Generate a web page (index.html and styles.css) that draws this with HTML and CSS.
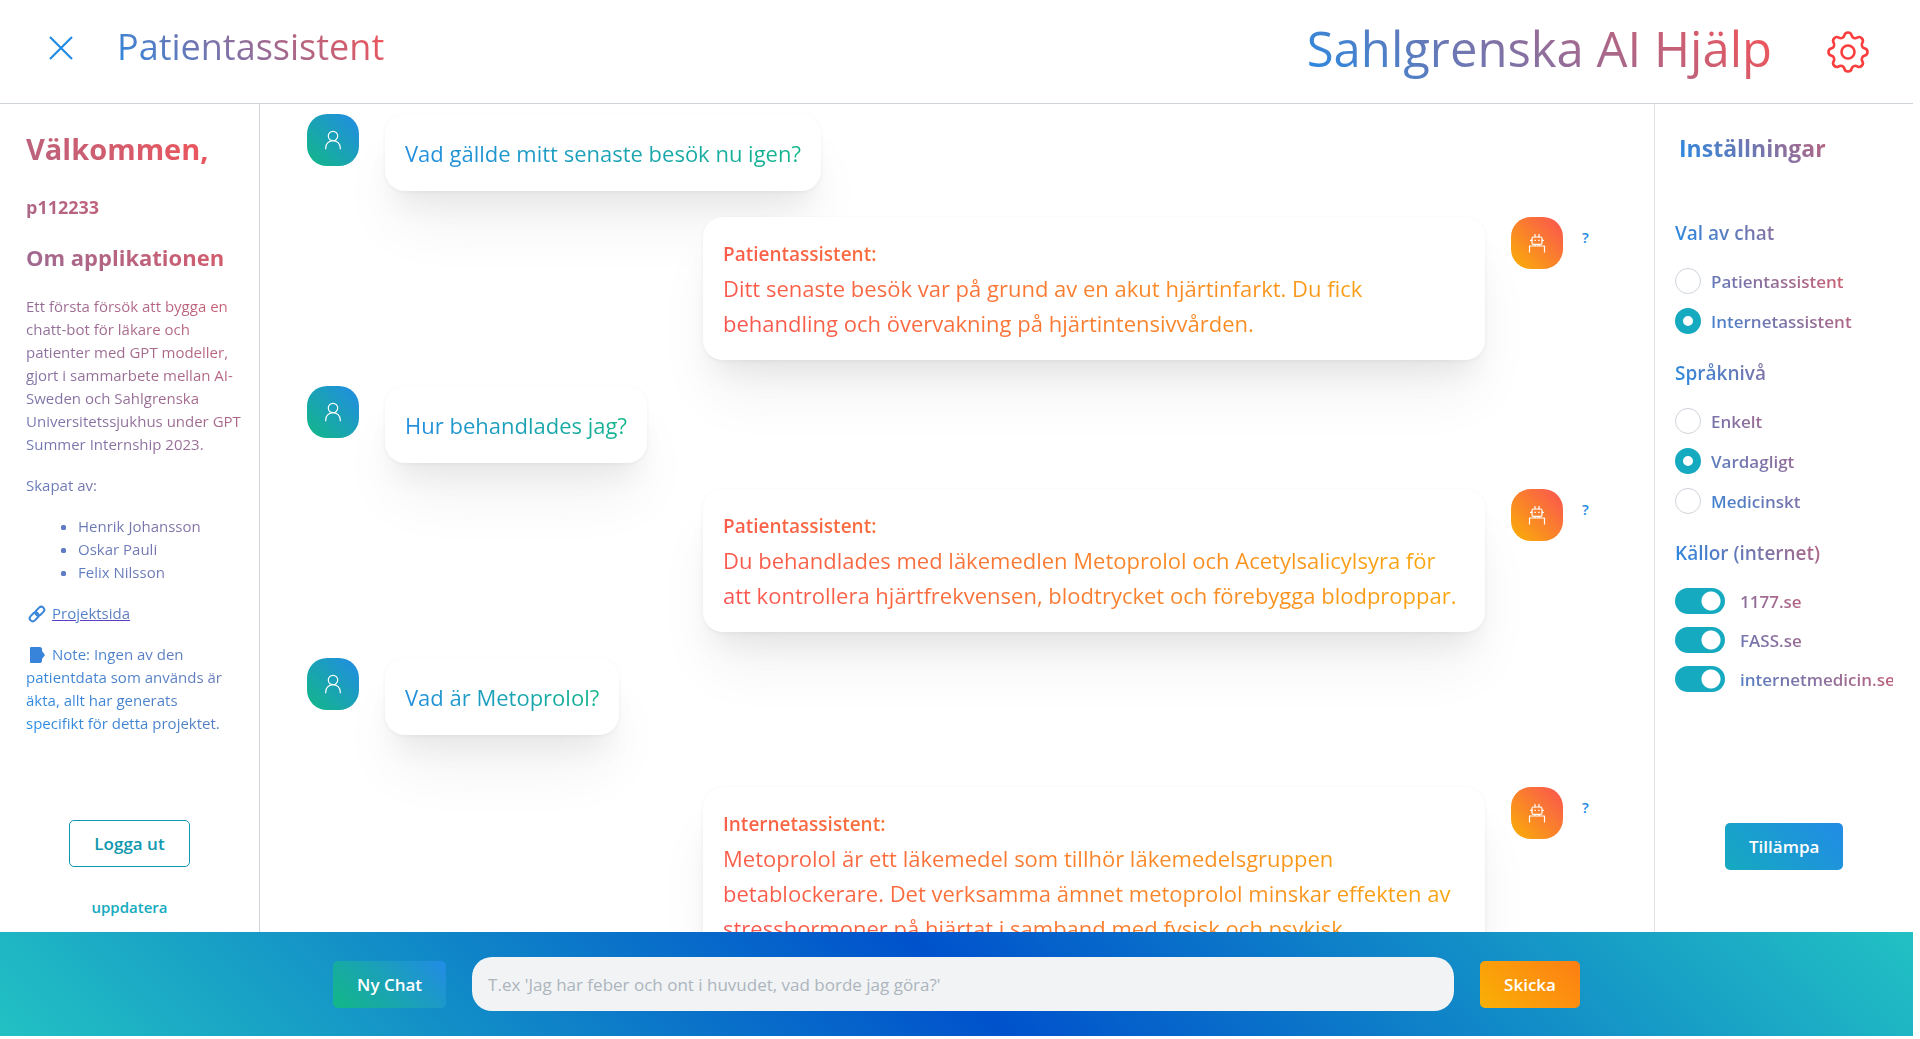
FILE: index.html
```html
<!DOCTYPE html>
<html lang="sv">
<head>
<meta charset="utf-8">
<title>Sahlgrenska AI Hjälp</title>
<link rel="stylesheet" href="styles.css">
</head>
<body>
<svg class="defs" aria-hidden="true">
  <symbol id="user" viewBox="0 0 18 20"><g fill="none" stroke="#fff" stroke-width="1.2" stroke-linecap="round"><circle cx="9" cy="6" r="4.7"/><path d="M1.8 18.8v-1.2a7.2 7 0 0 1 14.4 0v1.2"/></g></symbol>
  <symbol id="robot" viewBox="0 0 18 20"><g fill="none" stroke="#fff" stroke-width="1.2" stroke-linecap="round" stroke-linejoin="round"><rect x="4" y="4" width="10" height="7.4" rx="1.5"/><path d="M7 4V1.4M11 4V1.4M2.6 7.4H4M14 7.4h1.4M7 11.4v1.6M11 11.4v1.6M1.5 19v-6h15v6"/></g><path d="M6.5 6.7h1.4v1.4H6.5zM10.2 6.7h1.4v1.4h-1.4z" fill="#fff"/></symbol>
</svg>
<div class="app">
  <header class="top">
    <button class="icon-btn close" aria-label="Stäng"><svg width="26" height="26" viewBox="0 0 26 26"><path d="M2 2l22 22M24 2L2 24" stroke="#228be6" stroke-width="2.2" fill="none"/></svg></button>
    <h2 class="assistant grad">Patientassistent</h2>
    <h1 class="brand grad">Sahlgrenska AI Hjälp</h1>
    <button class="icon-btn" aria-label="Inställningar"><svg width="52" height="52" viewBox="0 0 24 24" fill="none" stroke="#fa3e3e" stroke-width="1.2" stroke-linejoin="round"><path d="M10.325 4.317c.426 -1.756 2.924 -1.756 3.35 0a1.724 1.724 0 0 0 2.573 1.066c1.543 -.94 3.31 .826 2.37 2.37a1.724 1.724 0 0 0 1.065 2.572c1.756 .426 1.756 2.924 0 3.35a1.724 1.724 0 0 0 -1.066 2.573c.94 1.543 -.826 3.31 -2.37 2.37a1.724 1.724 0 0 0 -2.572 1.065c-.426 1.756 -2.924 1.756 -3.35 0a1.724 1.724 0 0 0 -2.573 -1.066c-1.543 .94 -3.31 -.826 -2.37 -2.37a1.724 1.724 0 0 0 -1.065 -2.572c-1.756 -.426 -1.756 -2.924 0 -3.35a1.724 1.724 0 0 0 1.066 -2.573c-.94 -1.543 .826 -3.31 2.37 -2.37c1 .608 2.296 .07 2.572 -1.065z"/><circle cx="12" cy="12" r="3"/></svg></button>
  </header>
  <div class="middle">
    <aside class="about">
      <div class="about-text grad">
        <h2 class="welcome">Välkommen,</h2>
        <p class="user-id">p112233</p>
        <h3 class="about-title">Om applikationen</h3>
        <p>Ett första försök att bygga en chatt-bot för läkare och patienter med GPT modeller, gjort i sammarbete mellan AI-Sweden och Sahlgrenska Universitetssjukhus under GPT Summer Internship 2023.</p>
        <p>Skapat av:</p>
        <ul><li>Henrik Johansson</li><li>Oskar Pauli</li><li>Felix Nilsson</li></ul>
        <p><svg class="glyph" viewBox="0 0 16 16"><g fill="none" stroke="#3c86d8" stroke-width="2" transform="rotate(-45 8 8)"><rect x="-1" y="5" width="10" height="6" rx="3"/><rect x="7" y="5" width="10" height="6" rx="3"/></g></svg><a href="#">Projektsida</a></p>
        <p class="note"><svg class="glyph" viewBox="0 0 16 16"><path d="M2 0h9q1.500 0 2 1.500V4L16 8l-3 4v2q0 2-2 2H2q-1 0-1-1V1q0-1 1-1z" fill="#3884da"/></svg>Note: Ingen av den patientdata som används är äkta, allt har generats specifikt för detta projektet.</p>
      </div>
      <button class="btn btn-outline">Logga ut</button>
      <button class="link-btn">uppdatera</button>
    </aside>
    <main class="chat">
      <div class="row"><span class="avatar me"><svg width="18" height="20"><use href="#user"/></svg></span><div class="bubble mine"><p class="grad-me">Vad gällde mitt senaste besök nu igen?</p></div></div>
      <div class="row reply"><div class="bubble"><div class="grad-bot"><strong>Patientassistent:</strong><p>Ditt senaste besök var på grund av en akut hjärtinfarkt. Du fick behandling och övervakning på hjärtintensivvården.</p></div></div><span class="avatar bot"><svg width="18" height="20"><use href="#robot"/></svg></span><button class="why">?</button></div>
      <div class="row"><span class="avatar me"><svg width="18" height="20"><use href="#user"/></svg></span><div class="bubble mine"><p class="grad-me">Hur behandlades jag?</p></div></div>
      <div class="row reply"><div class="bubble"><div class="grad-bot"><strong>Patientassistent:</strong><p>Du behandlades med läkemedlen Metoprolol och Acetylsalicylsyra för att kontrollera hjärtfrekvensen, blodtrycket och förebygga blodproppar.</p></div></div><span class="avatar bot"><svg width="18" height="20"><use href="#robot"/></svg></span><button class="why">?</button></div>
      <div class="row"><span class="avatar me"><svg width="18" height="20"><use href="#user"/></svg></span><div class="bubble mine"><p class="grad-me">Vad är Metoprolol?</p></div></div>
      <div class="row reply latest"><div class="bubble"><div class="grad-bot"><strong>Internetassistent:</strong><p>Metoprolol är ett läkemedel som tillhör läkemedelsgruppen betablockerare. Det verksamma ämnet metoprolol minskar effekten av stresshormoner på hjärtat i samband med fysisk och psykisk</p></div></div><span class="avatar bot"><svg width="18" height="20"><use href="#robot"/></svg></span><button class="why">?</button></div>
    </main>
    <aside class="settings">
      <h2 class="settings-title grad">Inställningar</h2>
      <fieldset>
        <legend class="grad">Val av chat</legend>
        <div class="options grad">
          <label class="radio"><input type="radio" name="chat"><span>Patientassistent</span></label>
          <label class="radio"><input type="radio" name="chat" checked><span>Internetassistent</span></label>
        </div>
      </fieldset>
      <fieldset>
        <legend class="grad">Språknivå</legend>
        <div class="options grad">
          <label class="radio"><input type="radio" name="level"><span>Enkelt</span></label>
          <label class="radio"><input type="radio" name="level" checked><span>Vardagligt</span></label>
          <label class="radio"><input type="radio" name="level"><span>Medicinskt</span></label>
        </div>
      </fieldset>
      <fieldset>
        <legend class="grad">Källor (internet)</legend>
        <div class="options switches grad">
          <label class="switch"><input type="checkbox" checked><span>1177.se</span></label>
          <label class="switch"><input type="checkbox" checked><span>FASS.se</span></label>
          <label class="switch"><input type="checkbox" checked><span>internetmedicin.se</span></label>
        </div>
      </fieldset>
      <button class="btn btn-apply">Tillämpa</button>
    </aside>
  </div>
  <footer class="composer">
    <button class="btn btn-new">Ny Chat</button>
    <input class="prompt" type="text" aria-label="Meddelande" placeholder="T.ex 'Jag har feber och ont i huvudet, vad borde jag göra?'">
    <button class="btn btn-send">Skicka</button>
  </footer>
</div>
</body>
</html>
```
FILE: styles.css
```css
* { box-sizing: border-box; }
body { margin: 0; padding: 0 7px 3px 0; background: #fff; font-family: "Open Sans", "Noto Sans", sans-serif; font-size: 15px; color: #228be6; }
h1, h2, h3, p, ul, fieldset { margin: 0; padding: 0; border: 0; }
button { font: inherit; padding: 0; border: 0; background: none; cursor: pointer; }
.defs { position: absolute; width: 0; height: 0; }

.app { display: flex; flex-direction: column; height: calc(100vh - 3px); min-height: 900px; }

.grad, .grad-me, .grad-bot { color: transparent; background-clip: text; -webkit-background-clip: text; }
.grad { background-image: linear-gradient(45deg, #228be6, #fa5252); }
.grad-me { background-image: linear-gradient(45deg, #228be6, #12b886); }
.grad-bot { background-image: linear-gradient(45deg, #fa5252, #fab005); }

.top { flex: none; display: flex; align-items: center; height: 104px; padding: 0 39px 0 48px; border-bottom: 1px solid #ced4da; }
.icon-btn { display: flex; }
.close { padding-bottom: 8px; }
.assistant { margin-left: 43px; padding-bottom: 10px; font-size: 36px; line-height: 52px; font-weight: 400; }
.brand { margin-left: auto; margin-right: 50px; font-size: 49px; line-height: 72px; padding-bottom: 8px; font-weight: 400; }

.middle { flex: 1; display: flex; min-height: 0; }

.about { flex: none; width: 260px; padding: 26px 16px 0 26px; display: flex; flex-direction: column; align-items: center; border-right: 1px solid #ced4da; }
.about-text { width: 100%; line-height: 23px; font-size: 15px; }
.about-text > * { margin-bottom: 18px; }
.about-text > :last-child { margin-bottom: 0; }
.about-text .welcome { font-size: 29px; line-height: 38px; margin-bottom: 26px; }
.about-text .user-id { font-size: 18px; line-height: 26px; font-weight: 700; margin-bottom: 23px; }
.about-text .about-title { font-size: 22px; line-height: 28px; margin-bottom: 24px; }
.about-text ul { padding-left: 52px; }
.about-text li::marker { color: #5f7cc6; }
.about-text a { color: transparent; text-decoration: underline #5f3dc4; }
.about-text .note { padding-right: 16px; }
.glyph { width: 16px; height: 16px; margin: 0 7px 0 3px; vertical-align: -3px; overflow: visible; }

.btn { height: 47px; padding: 0 24px; border-radius: 5px; font-size: 17px; font-weight: 600; color: #fff; }
.btn-outline { margin: 85px 10px 0 0; color: #1098ad; border: 1px solid #1098ad; }
.link-btn { margin: 30px 10px 0 0; font-size: 15px; line-height: 20px; font-weight: 600; color: #15aabf; }

.chat { flex: 1; min-width: 0; overflow: hidden; display: flex; flex-direction: column; gap: 26px; padding: 10px 47px 0; }
.row { flex: none; display: flex; align-items: flex-start; gap: 26px; }
.reply { padding-left: 396px; }
.latest { margin-top: 26px; }
.avatar { flex: none; width: 52px; height: 52px; border-radius: 20px; display: flex; align-items: center; justify-content: center; }
.me { background: linear-gradient(45deg, #12b886, #228be6); }
.bot { background: linear-gradient(45deg, #fab005, #fa5252); }
.bubble { width: 782px; flex: 0 1 auto; padding: 21px 20px 19px; border-radius: 20px; background: #fff; font-size: 22px; line-height: 35px; box-shadow: 0 1px 4px rgba(0,0,0,.05), 0 40px 60px -8px rgba(0,0,0,.06), 0 22px 28px -9px rgba(0,0,0,.06); }
.mine { width: auto; padding: 22px 20px 20px; }
.bubble strong { display: block; font-size: 19px; line-height: 33px; font-weight: 600; }
.why { margin: 10px 0 0 -7px; font-size: 15px; line-height: 20px; font-weight: 600; color: #228be6; }

.settings { flex: none; width: 259px; padding: 28px 20px 0; border-left: 1px solid #dee2e6; }
.settings-title { font-size: 23px; line-height: 32px; margin: 0 0 54px 4px; font-weight: 700; }
fieldset { min-width: 0; margin-bottom: 24px; }
legend { width: 100%; padding: 0; margin-bottom: 20px; font-size: 19px; line-height: 30px; font-weight: 600; }
.options { display: flex; flex-direction: column; gap: 14px; }
.switches { gap: 13px; }
label { display: flex; align-items: center; height: 26px; font-size: 17px; line-height: 24px; font-weight: 600; }
label span { padding-top: 2px; }
.radio { gap: 10px; }
.radio input { appearance: none; margin: 0; width: 26px; height: 26px; border-radius: 50%; border: 1px solid #ced4da; background: #fff; }
.radio input:checked { border: 8px solid #15aabf; }
.switch { gap: 15px; }
.switch input { appearance: none; flex: none; margin: 0; width: 50px; height: 26px; border-radius: 13px; background: radial-gradient(circle at 36px 13px, #fff 9px, #15aabf 10px); }
.btn-apply { display: block; margin: 131px 0 0 50px; background: linear-gradient(45deg, #15aabf, #228be6); }

.composer { flex: none; display: flex; align-items: center; justify-content: center; gap: 26px; height: 104px; padding: 0 39px; background: linear-gradient(45deg, #22c1c3, #0052cc 50%, #22c1c3); }
.prompt { flex: 0 1 982px; min-width: 0; height: 54px; padding: 0 16px; border: 0; border-radius: 20px; background: #f1f3f5; font: inherit; font-size: 17px; color: #212529; }
.prompt::placeholder { color: #adb5bd; opacity: 1; }
.btn-new { background: linear-gradient(45deg, #12b886, #228be6); }
.btn-send { background: linear-gradient(45deg, #fab005, #fd7e14); }
```
